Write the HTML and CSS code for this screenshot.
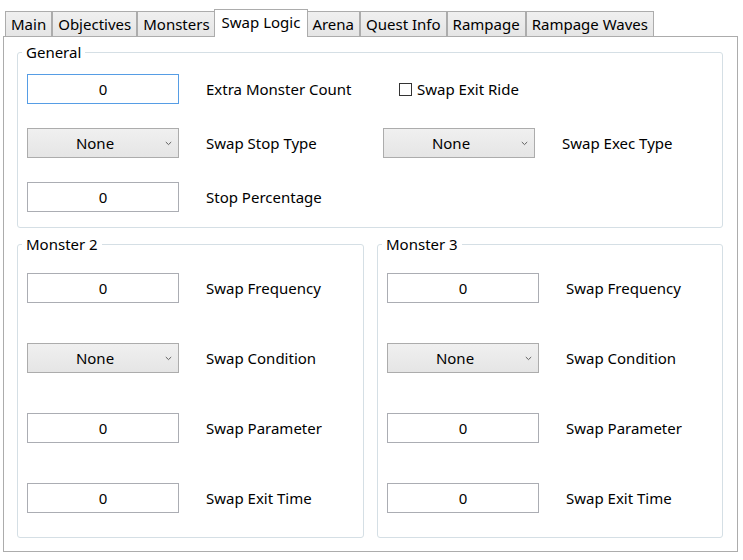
FILE: index.html
```html
<!DOCTYPE html>
<html>
<head>
<meta charset="utf-8">
<link rel="stylesheet" href="styles.css">
</head>
<body>
<div class="window">
  <div class="tabs">
    <div class="tab">Main</div>
    <div class="tab">Objectives</div>
    <div class="tab">Monsters</div>
    <div class="tab active">Swap Logic</div>
    <div class="tab">Arena</div>
    <div class="tab">Quest Info</div>
    <div class="tab">Rampage</div>
    <div class="tab">Rampage Waves</div>
  </div>
  <div class="panel">
    <div class="group">
      <div class="group-title">General</div>
      <div class="general-grid">
        <div class="textbox focused">0</div>
        <span class="label">Extra Monster Count</span>
        <label class="check"><span class="box"></span><span>Swap Exit Ride</span></label>
        <span></span>

        <div class="combo"><span class="combo-text">None</span><span class="arrow"><svg width="7" height="5" viewBox="0 0 7 5"><path d="M0.8 1 L3.5 3.6 L6.2 1" fill="none" stroke="#606060" stroke-width="1"/></svg></span></div>
        <span class="label">Swap Stop Type</span>
        <div class="combo"><span class="combo-text">None</span><span class="arrow"><svg width="7" height="5" viewBox="0 0 7 5"><path d="M0.8 1 L3.5 3.6 L6.2 1" fill="none" stroke="#606060" stroke-width="1"/></svg></span></div>
        <span class="label">Swap Exec Type</span>

        <div class="textbox">0</div>
        <span class="label">Stop Percentage</span>
      </div>
    </div>
    <div class="monsters">
      <div class="group">
        <div class="group-title monster-title">Monster 2</div>
        <div class="monster-grid">
          <div class="textbox">0</div>
          <span class="label">Swap Frequency</span>
          <div class="combo"><span class="combo-text">None</span><span class="arrow"><svg width="7" height="5" viewBox="0 0 7 5"><path d="M0.8 1 L3.5 3.6 L6.2 1" fill="none" stroke="#606060" stroke-width="1"/></svg></span></div>
          <span class="label">Swap Condition</span>
          <div class="textbox">0</div>
          <span class="label">Swap Parameter</span>
          <div class="textbox">0</div>
          <span class="label">Swap Exit Time</span>
        </div>
      </div>
      <div class="group">
        <div class="group-title monster-title">Monster 3</div>
        <div class="monster-grid">
          <div class="textbox">0</div>
          <span class="label">Swap Frequency</span>
          <div class="combo"><span class="combo-text">None</span><span class="arrow"><svg width="7" height="5" viewBox="0 0 7 5"><path d="M0.8 1 L3.5 3.6 L6.2 1" fill="none" stroke="#606060" stroke-width="1"/></svg></span></div>
          <span class="label">Swap Condition</span>
          <div class="textbox">0</div>
          <span class="label">Swap Parameter</span>
          <div class="textbox">0</div>
          <span class="label">Swap Exit Time</span>
        </div>
      </div>
    </div>
  </div>
</div>
</body>
</html>
```

FILE: styles.css
```css
* {
  box-sizing: border-box;
}

body {
  margin: 0;
  background: #ffffff;
  font-family: "Noto Sans", "Open Sans", sans-serif;
  font-size: 15px;
  color: #000000;
}

.window {
  width: 743px;
  height: 560px;
  background: #ffffff;
}

.tabs {
  display: flex;
  align-items: flex-end;
  height: 36px;
  padding-left: 5px;
}

.tab {
  height: 25px;
  line-height: 24px;
  padding: 0 5px;
  border: 1px solid #acacac;
  border-bottom: none;
  background: linear-gradient(#f0f0f0, #e5e5e5);
  white-space: nowrap;
}

.tab.active {
  position: relative;
  z-index: 1;
  height: 28px;
  margin: 0 -2px -1px -2px;
  padding: 0 7px 3px;
  background: #ffffff;
}

.panel {
  width: 735px;
  margin-left: 3px;
  border: 1px solid #acacac;
  padding: 15px 14px 13px 13px;
}

.group {
  border: 1px solid #d5dfe5;
  border-radius: 3px;
  padding: 0 9px 15px;
}

.group-title {
  width: max-content;
  height: 20px;
  line-height: 20px;
  margin: -11px 0 12px -5px;
  padding: 0 4px;
  background: #ffffff;
}

.monster-title {
  margin-bottom: 19px;
}

.general-grid {
  display: grid;
  grid-template-columns: 152px 204px 152px 1fr;
  grid-auto-rows: 30px;
  row-gap: 24px;
  align-items: center;
}

.label {
  padding-left: 27px;
  white-space: nowrap;
}

.textbox {
  height: 30px;
  border: 1px solid #abadb3;
  background: #ffffff;
  text-align: center;
  line-height: 28px;
}

.textbox.focused {
  border-color: #569de5;
}

.combo {
  display: flex;
  align-items: center;
  height: 30px;
  border: 1px solid #acacac;
  background: linear-gradient(#f0f0f0, #e5e5e5);
  padding-right: 3px;
}

.combo-text {
  flex: 1;
  text-align: center;
  line-height: 28px;
}

.arrow {
  width: 13px;
  display: flex;
  justify-content: center;
  align-items: center;
}

.arrow svg {
  display: block;
}

.check {
  display: flex;
  align-items: center;
  gap: 5px;
  padding-left: 16px;
}

.box {
  width: 13px;
  height: 13px;
  border: 1px solid #333333;
  background: #ffffff;
}

.monsters {
  display: grid;
  grid-template-columns: 347px 346px;
  column-gap: 13px;
  margin-top: 16px;
}

.monsters .group {
  padding-bottom: 24px;
}

.monster-grid {
  display: grid;
  grid-template-columns: 152px 1fr;
  grid-auto-rows: 30px;
  row-gap: 40px;
  align-items: center;
}
```
